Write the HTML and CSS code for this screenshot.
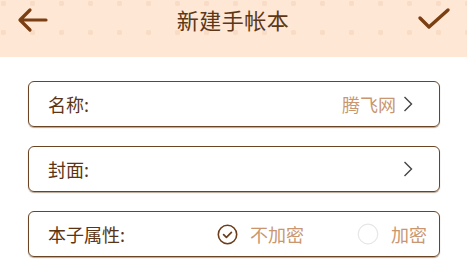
FILE: index.html
```html
<!DOCTYPE html>
<html lang="zh">
<head>
<meta charset="utf-8">
<link rel="stylesheet" href="styles.css">
</head>
<body>
<header class="topbar">
  <svg class="icon-back" width="34" height="34" viewBox="0 0 34 34"><path d="M31 18H6M15 8L5 18l10 10" fill="none" stroke="#7a3f12" stroke-width="3.2" stroke-linecap="round" stroke-linejoin="round"/></svg>
  <h1 class="title">新建手帐本</h1>
  <svg class="icon-ok" width="34" height="34" viewBox="0 0 34 34"><path d="M3 16l9 9L31 8" fill="none" stroke="#7a3f12" stroke-width="3.4" stroke-linecap="round" stroke-linejoin="round"/></svg>
</header>
<main class="form">
  <div class="row">
    <span class="label">名称:</span>
    <span class="value">腾飞网</span>
    <svg class="chev" width="10" height="18" viewBox="0 0 10 18"><path d="M1.5 2l7 7-7 7" fill="none" stroke="#444" stroke-width="1.4"/></svg>
  </div>
  <div class="row">
    <span class="label">封面:</span>
    <span class="value"></span>
    <svg class="chev" width="10" height="18" viewBox="0 0 10 18"><path d="M1.5 2l7 7-7 7" fill="none" stroke="#444" stroke-width="1.4"/></svg>
  </div>
  <div class="row">
    <span class="label">本子属性:</span>
    <span class="opt">
      <svg width="21" height="21" viewBox="0 0 21 21"><circle cx="10.5" cy="10.5" r="9.2" fill="none" stroke="#6a3e1c" stroke-width="1.6"/><path d="M6.6 10.6l2.8 2.7 5-5" fill="none" stroke="#6a3e1c" stroke-width="1.7" stroke-linecap="round" stroke-linejoin="round"/></svg>
      <span class="opt-text">不加密</span>
    </span>
    <span class="opt">
      <svg width="22" height="22" viewBox="0 0 22 22"><circle cx="11" cy="11" r="9.8" fill="none" stroke="#e6e6e6" stroke-width="1.2"/></svg>
      <span class="opt-text">加密</span>
    </span>
  </div>
</main>
</body>
</html>
```
FILE: styles.css
```css
* { box-sizing: border-box; }
html, body { margin: 0; padding: 0; background: #fff; }
body {
  width: 467px;
  height: 261px;
  overflow: hidden;
  font-family: "Noto Sans CJK SC", "Noto Sans", sans-serif;
}
.topbar {
  height: 57px;
  background-color: #fee7d4;
  background-image: radial-gradient(circle, #f8dcc6 2.6px, transparent 3px);
  background-size: 29px 29px;
  background-position: -11px -11px;
  display: flex;
  align-items: center;
  justify-content: space-between;
  padding: 0 16px 0 13px;
  margin-bottom: 24px;
}
.icon-back { margin-top: -19px; margin-left: 2px; }
.icon-ok { margin-top: -19px; }
.title {
  margin: -19px 0 0 0;
  font-size: 22px;
  font-weight: 400;
  color: #5c3818;
  letter-spacing: 0.5px;
  line-height: 1;
}
.form {
  display: flex;
  flex-direction: column;
  gap: 19px;
  padding: 0 27px 0 28px;
}
.row {
  height: 46px;
  border: 1px solid #6b4423;
  border-radius: 6px;
  box-shadow: 0 1px 1px rgba(90, 55, 25, 0.45);
  display: flex;
  align-items: center;
  padding: 0 26px 0 19px;
}
.label {
  font-size: 18px;
  color: #5a3414;
  flex: 1;
}
.value {
  font-size: 18px;
  color: #c99670;
  margin-right: 7px;
}
.chev { display: block; }
.row .label + .opt { margin-right: 0; }
.opt {
  display: flex;
  align-items: center;
  gap: 12px;
}
.opt + .opt { margin-left: 53px; }
.row:last-child { padding-right: 12px; }
.opt-text {
  font-size: 18px;
  color: #c99670;
}
```
